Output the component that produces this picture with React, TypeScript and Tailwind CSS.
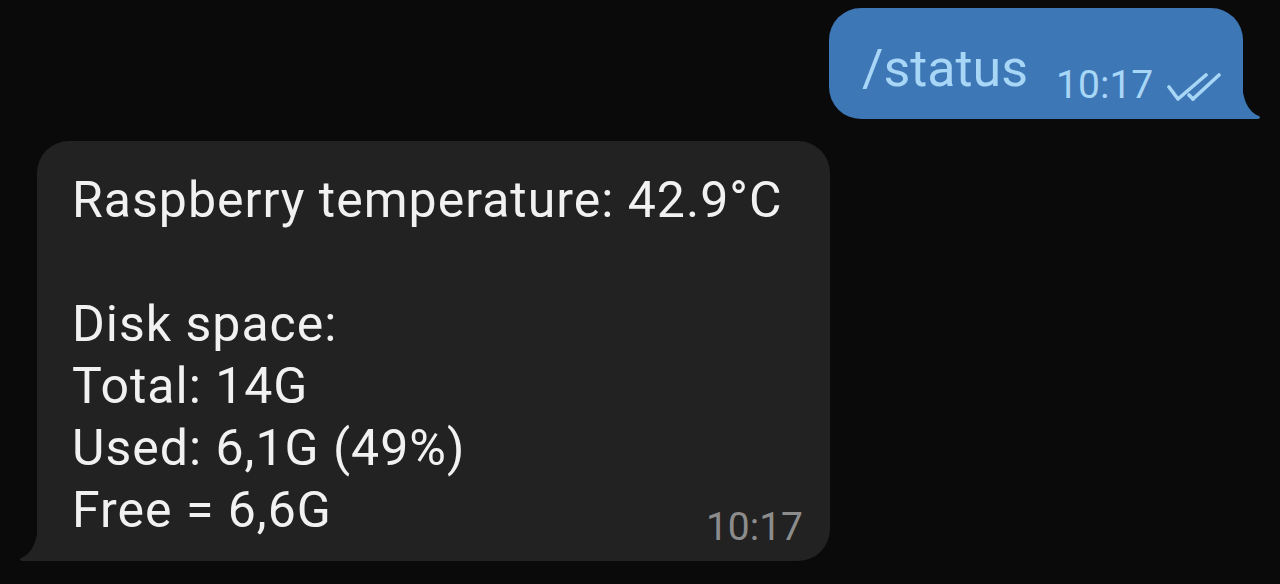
import React from "react";

function DoubleCheck() {
  return (
    <svg width="56" height="30" viewBox="0 0 56 30" fill="none" stroke="#a8d6f6" strokeWidth="3.6" strokeLinecap="round" strokeLinejoin="round">
      <path d="M3 14 L12 26 L40 2" />
      <path d="M27 26 L53 2" />
      <path d="M23 22 L27 26" />
    </svg>
  );
}

export default function App() {
  return (
    <div
      className="h-[584px] w-[1280px] overflow-hidden bg-[#0a0a0a] flex flex-col"
      style={{ fontFamily: "Roboto, 'Noto Sans', sans-serif" }}
    >
      <div className="flex justify-end pr-[37px] pt-[8px]">
        <div className="relative h-[111px] w-[414px] bg-[#3d77b6] rounded-[32px] rounded-br-none flex items-end pl-[33px] pb-[14px]">
          <span className="text-[52px] leading-none text-[#a8d6f6] mb-[10px]">/status</span>
          <span className="ml-[28px] text-[39px] leading-none text-[#a8d6f6]">10:17</span>
          <span className="ml-[13px] mb-[2px] flex">
            <DoubleCheck />
          </span>
          <svg className="absolute bottom-0 right-[-18px]" width="19" height="40" viewBox="0 0 19 40">
            <path d="M0 0 C 0 22, 7 33, 17 37 Q 19.5 38.5, 16 40 L 0 40 Z" fill="#3d77b6" />
          </svg>
        </div>
      </div>
      <div className="flex pl-[37px] pt-[22px]">
        <div className="relative h-[420px] w-[793px] bg-[#222222] rounded-[32px] rounded-bl-none pl-[35px] pr-[27px] pt-[28px]">
          <div className="text-[50px] leading-[62px] tracking-[1px] text-[#f1f1f1]">
            <div>Raspberry temperature: 42.9°C</div>
            <div>&nbsp;</div>
            <div>Disk space:</div>
            <div>Total: 14G</div>
            <div>Used: 6,1G (49%)</div>
            <div>Free = 6,6G</div>
          </div>
          <span className="absolute right-[27px] bottom-[14px] text-[39px] leading-none text-[#8c8c8c]">10:17</span>
          <svg className="absolute bottom-0 left-[-18px]" width="19" height="40" viewBox="0 0 19 40">
            <path d="M19 0 C 19 22, 12 33, 2 37 Q -0.5 38.5, 3 40 L 19 40 Z" fill="#222222" />
          </svg>
        </div>
      </div>
    </div>
  );
}
